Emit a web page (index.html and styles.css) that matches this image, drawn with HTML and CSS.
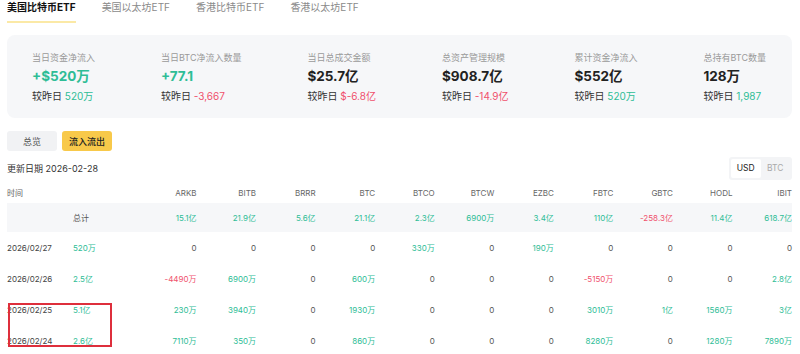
FILE: index.html
```html
<!DOCTYPE html>
<html lang="zh">
<head>
  <meta charset="UTF-8">
  <title>比特币ETF</title>
  <link rel="stylesheet" href="styles.css">
</head>
<body>
  <div class="page">
    <div class="tabs">
      <span class="tab active">美国比特币ETF</span>
      <span class="tab">美国以太坊ETF</span>
      <span class="tab">香港比特币ETF</span>
      <span class="tab">香港以太坊ETF</span>
    </div>

    <div class="stats">
      <div class="stat">
        <div class="label">当日资金净流入</div>
        <div class="value up">+$520万</div>
        <div class="diff">较昨日 <span class="up">520万</span></div>
      </div>
      <div class="stat">
        <div class="label">当日BTC净流入数量</div>
        <div class="value up">+77.1</div>
        <div class="diff">较昨日 <span class="down">-3,667</span></div>
      </div>
      <div class="stat">
        <div class="label">当日总成交金额</div>
        <div class="value">$25.7亿</div>
        <div class="diff">较昨日 <span class="down">$-6.8亿</span></div>
      </div>
      <div class="stat">
        <div class="label">总资产管理规模</div>
        <div class="value">$908.7亿</div>
        <div class="diff">较昨日 <span class="down">-14.9亿</span></div>
      </div>
      <div class="stat">
        <div class="label">累计资金净流入</div>
        <div class="value">$552亿</div>
        <div class="diff">较昨日 <span class="up">520万</span></div>
      </div>
      <div class="stat">
        <div class="label">总持有BTC数量</div>
        <div class="value">128万</div>
        <div class="diff">较昨日 <span class="up">1,987</span></div>
      </div>
    </div>

    <div class="switch">
      <button class="btn">总览</button>
      <button class="btn on">流入流出</button>
    </div>

    <div class="toolbar">
      <span class="date">更新日期 2026-02-28</span>
      <div class="unit">
        <span class="unit-on">USD</span>
        <span class="unit-off">BTC</span>
      </div>
    </div>

    <div class="table">
      <div class="row head">
        <span class="l">时间</span><span></span>
        <span>ARKB</span><span>BITB</span><span>BRRR</span><span>BTC</span><span>BTCO</span><span>BTCW</span>
        <span>EZBC</span><span>FBTC</span><span>GBTC</span><span>HODL</span><span>IBIT</span>
      </div>
      <div class="row total">
        <span></span><span class="l">总计</span>
        <span class="up">15.1亿</span><span class="up">21.9亿</span><span class="up">5.6亿</span><span class="up">21.1亿</span>
        <span class="up">2.3亿</span><span class="up">6900万</span><span class="up">3.4亿</span><span class="up">110亿</span>
        <span class="down">-258.3亿</span><span class="up">11.4亿</span><span class="up">618.7亿</span>
      </div>
      <div class="row">
        <span class="l d">2026/02/27</span><span class="l up">520万</span>
        <span>0</span><span>0</span><span>0</span><span>0</span>
        <span class="up">330万</span><span>0</span><span class="up">190万</span><span>0</span>
        <span>0</span><span>0</span><span>0</span>
      </div>
      <div class="row">
        <span class="l d">2026/02/26</span><span class="l up">2.5亿</span>
        <span class="down">-4490万</span><span class="up">6900万</span><span>0</span><span class="up">600万</span>
        <span>0</span><span>0</span><span>0</span><span class="down">-5150万</span>
        <span>0</span><span>0</span><span class="up">2.8亿</span>
      </div>
      <div class="row">
        <span class="l d">2026/02/25</span><span class="l up">5.1亿</span>
        <span class="up">230万</span><span class="up">3940万</span><span>0</span><span class="up">1930万</span>
        <span>0</span><span>0</span><span>0</span><span class="up">3010万</span>
        <span class="up">1亿</span><span class="up">1560万</span><span class="up">3亿</span>
      </div>
      <div class="row">
        <span class="l d">2026/02/24</span><span class="l up">2.6亿</span>
        <span class="up">7110万</span><span class="up">350万</span><span>0</span><span class="up">860万</span>
        <span>0</span><span>0</span><span>0</span><span class="up">8280万</span>
        <span>0</span><span class="up">1280万</span><span class="up">7890万</span>
      </div>
    </div>

    <!-- annotation box drawn over the table -->
    <div class="mark"></div>
  </div>
</body>
</html>
```

FILE: styles.css
```css
body {
  margin: 0;
  background: #fff;
  font-family: Inter, "Noto Sans CJK SC", sans-serif;
  color: #222;
  overflow: hidden;
}

.page {
  position: relative;
  padding: 0 8px 0 7px;
}

.tabs {
  display: flex;
  gap: 26px;
  height: 23px;
}

.tab {
  font-size: 10px;
  line-height: 14px;
  color: #8a8a8a;
  padding-bottom: 7px;
}

.tab.active {
  color: #111;
  font-weight: 700;
  border-bottom: 2px solid #fbe9a6;
}

.stats {
  margin-top: 12px;
  background: #f6f7f9;
  border-radius: 8px;
  padding: 17px 26px 15px 25px;
  display: flex;
  justify-content: space-between;
}

.label {
  font-size: 9px;
  line-height: 12px;
  color: #9a9a9a;
}

.value {
  margin-top: 2px;
  font-size: 13.5px;
  line-height: 20px;
  font-weight: 700;
  color: #222;
}

.diff {
  margin-top: 3px;
  font-size: 10px;
  line-height: 14px;
  color: #333;
}

.up { color: #2ebd96; }
.down { color: #f0506c; }

.switch {
  margin-top: 13px;
  display: flex;
  gap: 5px;
}

.btn {
  width: 50px;
  height: 20px;
  border: none;
  border-radius: 3px;
  background: #f1f2f4;
  color: #555;
  font-family: inherit;
  font-size: 9px;
  padding: 0;
}

.btn.on {
  background: #f8c94a;
  color: #222;
  font-weight: 500;
}

.toolbar {
  margin-top: 6px;
  display: flex;
  justify-content: space-between;
  align-items: center;
  height: 23px;
}

.date {
  font-size: 9px;
  color: #333;
}

.unit {
  display: flex;
  background: #f3f4f6;
  border-radius: 3px;
  padding: 2px;
  width: 59px;
  height: 19px;
}

.unit span {
  flex: 1;
  font-size: 8.5px;
  line-height: 19px;
  text-align: center;
}

.unit-on {
  background: #fff;
  border-radius: 2px;
  color: #222;
}

.unit-off {
  color: #aaa;
}

.table {
  margin-top: 2px;
}

.row {
  display: grid;
  grid-template-columns: 66px 64px repeat(11, 1fr);
  align-items: center;
  height: 31px;
  font-size: 8px;
  color: #555;
}

.row span {
  text-align: right;
  white-space: nowrap;
}

.row span.l {
  text-align: left;
}

.row .d {
  color: #444;
}

.head {
  height: 21px;
  color: #666;
}

.total {
  height: 29px;
  background: #f6f7f9;
}

.mark {
  position: absolute;
  left: 8px;
  top: 303px;
  width: 100px;
  height: 40px;
  border: 2px solid #de2f3c;
}
```
